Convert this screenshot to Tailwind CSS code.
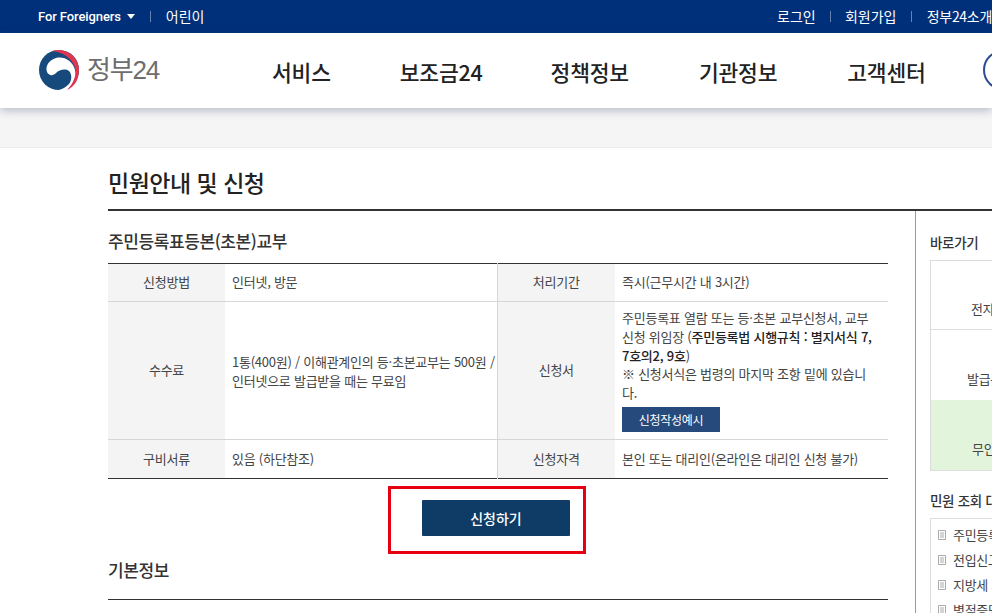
<!DOCTYPE html>
<html lang="ko">
<head>
    <meta charset="UTF-8">
    <title>정부24 민원안내 및 신청</title>
    <script src="https://cdn.jsdelivr.net/npm/@tailwindcss/browser@4"></script>
</head>
<body class="w-[992px] h-[613px] overflow-hidden bg-white text-[#333] font-['Noto_Sans_CJK_KR','Noto_Sans',sans-serif]">
    <!-- top bar -->
    <div class="h-[33px] bg-[#00307a] text-white flex items-center justify-between pl-[38px] text-[14px] whitespace-nowrap">
        <div class="flex items-center">
            <span class="text-[13px] font-medium font-['Roboto'] tracking-[-0.1px]">For Foreigners</span>
            <span class="ml-[6px] w-0 h-0 border-x-[4px] border-x-transparent border-t-[5px] border-t-white"></span>
            <span class="mx-[15px] w-px h-[11px] bg-white/40"></span>
            <span>어린이</span>
        </div>
        <div class="flex items-center w-[215px] shrink-0 overflow-hidden">
            <span>로그인</span>
            <span class="mx-[14.5px] w-px h-[11px] bg-white/40"></span>
            <span>회원가입</span>
            <span class="mx-[15px] w-px h-[11px] bg-white/40"></span>
            <span class="tracking-[-0.3px]">정부24소개</span>
        </div>
    </div>

    <!-- header -->
    <header class="relative z-10 h-[75px] bg-white flex items-center pl-[38px] shadow-[0_3px_8px_rgba(60,70,110,0.3)] whitespace-nowrap overflow-visible">
        <svg class="w-[42px] h-[42px] shrink-0 -mt-[2px]" viewBox="0 0 42 42">
            <circle cx="21" cy="21" r="20" fill="#174a7c"/>
            <path d="M32 42C38 36 39 28 37 21C35 12 26 7 18 9C11 11 7 17 9 23C11 27 15 27 18 24C21 21 27 19 31 22C34 25 34 31 31 35C28 38 25 40 21 41Z" fill="#fff"/>
            <path d="M14 2C28-2 41 8 41 21C41 31 36 38 29 41C34 36 38 29 37.5 21C36 11 26 3 14 2Z" fill="#e0354f"/>
        </svg>
        <span class="ml-[7px] w-[72px] -mt-[2px] text-[26px] leading-none font-['Liberation_Sans','Noto_Sans_CJK_KR',sans-serif] text-[#6e6e6e] tracking-[-1.2px] shrink-0">정부24</span>
        <nav class="ml-[113px] mt-[3px] flex items-center gap-[69px] text-[21.5px] font-medium text-[#222] tracking-[-0.2px] shrink-0">
            <span>서비스</span>
            <span>보조금24</span>
            <span class="-ml-[1px]">정책정보</span>
            <span class="ml-[1px]">기관정보</span>
            <span class="ml-[1px]">고객센터</span>
        </nav>
        <span class="ml-[57px] -mt-[1px] w-[40px] h-[40px] shrink-0 rounded-full border-[2px] border-[#2f4b8f]"></span>
    </header>

    <div class="h-[40px] bg-[#f5f5f6] border-b border-[#eeeeee]"></div>

    <!-- title -->
    <div class="pl-[108px] h-[61px]">
        <h1 class="pt-[17px] text-[23px] leading-[34px] font-medium text-[#222] tracking-[-0.5px] whitespace-nowrap">민원안내 및 신청</h1>
    </div>
    <div class="ml-[108px] h-[2px] bg-[#333]"></div>

    <div class="flex pl-[108px] items-stretch h-[403px]">
        <main class="w-[780px] shrink-0">
            <h2 class="pt-[17px] text-[17px] leading-[25px] font-medium text-[#333] tracking-[-0.4px]">주민등록표등본(초본)교부</h2>
            <table class="mt-[10px] w-[780px] table-fixed border-collapse border-t border-b border-[#333] text-[13px] leading-[18.7px] text-[#444] tracking-[-0.25px]">
                <colgroup>
                    <col class="w-[117px]"><col class="w-[272px]"><col class="w-[118px]"><col class="w-[273px]">
                </colgroup>
                <tr class="h-[38px] border-b border-[#d6d6d6]">
                    <th class="bg-[#f4f4f4] font-normal text-center">신청방법</th>
                    <td class="px-[7px]">인터넷, 방문</td>
                    <th class="bg-[#f4f4f4] font-normal text-center border-l border-[#d6d6d6]">처리기간</th>
                    <td class="px-[7px]">즉시(근무시간 내 3시간)</td>
                </tr>
                <tr class="h-[138px] border-b border-[#d6d6d6]">
                    <th class="bg-[#f4f4f4] font-normal text-center">수수료</th>
                    <td class="pl-[7px] pr-0 pt-[2px]">1통(400원) / 이해관계인의 등·초본교부는 500원 / 인터넷으로 발급받을 때는 무료임</td>
                    <th class="bg-[#f4f4f4] font-normal text-center border-l border-[#d6d6d6]">신청서</th>
                    <td class="pl-[7px] pr-[12px] py-[7px]">
                        주민등록표 열람 또는 등·초본 교부신청서, 교부 신청 위임장 (<b class="font-medium text-[#222]">주민등록법 시행규칙 : 별지서식 7, 7호의2, 9호</b>)<br>
                        ※ 신청서식은 법령의 마지막 조항 밑에 있습니다.
                        <span class="block mt-[4px] w-[98px] h-[25px] leading-[25px] bg-[#264a7c] text-white text-center text-[12px]">신청작성예시</span>
                    </td>
                </tr>
                <tr class="h-[39px]">
                    <th class="bg-[#f4f4f4] font-normal text-center">구비서류</th>
                    <td class="px-[7px]">있음 (하단참조)</td>
                    <th class="bg-[#f4f4f4] font-normal text-center border-l border-[#d6d6d6]">신청자격</th>
                    <td class="px-[7px]">본인 또는 대리인(온라인은 대리인 신청 불가)</td>
                </tr>
            </table>

            <div class="mt-[7px] ml-[280px] w-[198px] h-[68px] border-[3px] border-[#e60012] pt-[11px] pl-[31px]">
                <button class="block w-[148px] h-[36px] rounded-[1px] bg-[#0f3c66] text-white text-[14px] font-medium">신청하기</button>
            </div>

            <h2 class="pt-[3px] text-[17px] leading-[25px] font-medium text-[#333] tracking-[-0.4px]">기본정보</h2>
            <div class="mt-[17px] h-px bg-[#333]"></div>
        </main>

        <aside class="ml-[27px] w-[200px] shrink-0 border-l border-[#9a9a9a] pl-[14px] whitespace-nowrap">
            <h3 class="pt-[21px] text-[13.5px] leading-[20px] font-medium text-[#333] tracking-[-0.3px]">바로가기</h3>
            <div class="mt-[8px] w-[150px] border border-[#dcdcdc] text-[13px] text-[#444] tracking-[-0.3px]">
                <div class="h-[69px] pl-[40px] pt-[38px] leading-[20px] border-b border-[#dcdcdc]">전자문서</div>
                <div class="h-[70px] pl-[36px] pt-[39px] leading-[20px]">발급문서</div>
                <div class="h-[70px] pl-[41px] pt-[39px] leading-[20px] bg-[#e2f5dc]">무인민원</div>
            </div>
            <h3 class="mt-[19px] text-[13.5px] leading-[20px] font-medium text-[#333] tracking-[-0.3px]">민원 조회 대행</h3>
            <ul class="mt-[8px] w-[150px] border border-[#dcdcdc] pt-[3px] pl-[7px] text-[13px] leading-[25px] text-[#444] tracking-[-0.3px]">
                <li class="flex items-center gap-[7px]">
                    <svg class="w-[8px] h-[10px] shrink-0" viewBox="0 0 8 10" fill="none" stroke="#aaa"><path d="M.5.5h7v9h-7zM2 3h4M2 5h4M2 7h4"/></svg>주민등록
                </li>
                <li class="flex items-center gap-[7px]">
                    <svg class="w-[8px] h-[10px] shrink-0" viewBox="0 0 8 10" fill="none" stroke="#aaa"><path d="M.5.5h7v9h-7zM2 3h4M2 5h4M2 7h4"/></svg>전입신고
                </li>
                <li class="flex items-center gap-[7px]">
                    <svg class="w-[8px] h-[10px] shrink-0" viewBox="0 0 8 10" fill="none" stroke="#aaa"><path d="M.5.5h7v9h-7zM2 3h4M2 5h4M2 7h4"/></svg>지방세 세목
                </li>
                <li class="flex items-center gap-[7px]">
                    <svg class="w-[8px] h-[10px] shrink-0" viewBox="0 0 8 10" fill="none" stroke="#aaa"><path d="M.5.5h7v9h-7zM2 3h4M2 5h4M2 7h4"/></svg>병적증명
                </li>
            </ul>
        </aside>
    </div>
</body>
</html>
